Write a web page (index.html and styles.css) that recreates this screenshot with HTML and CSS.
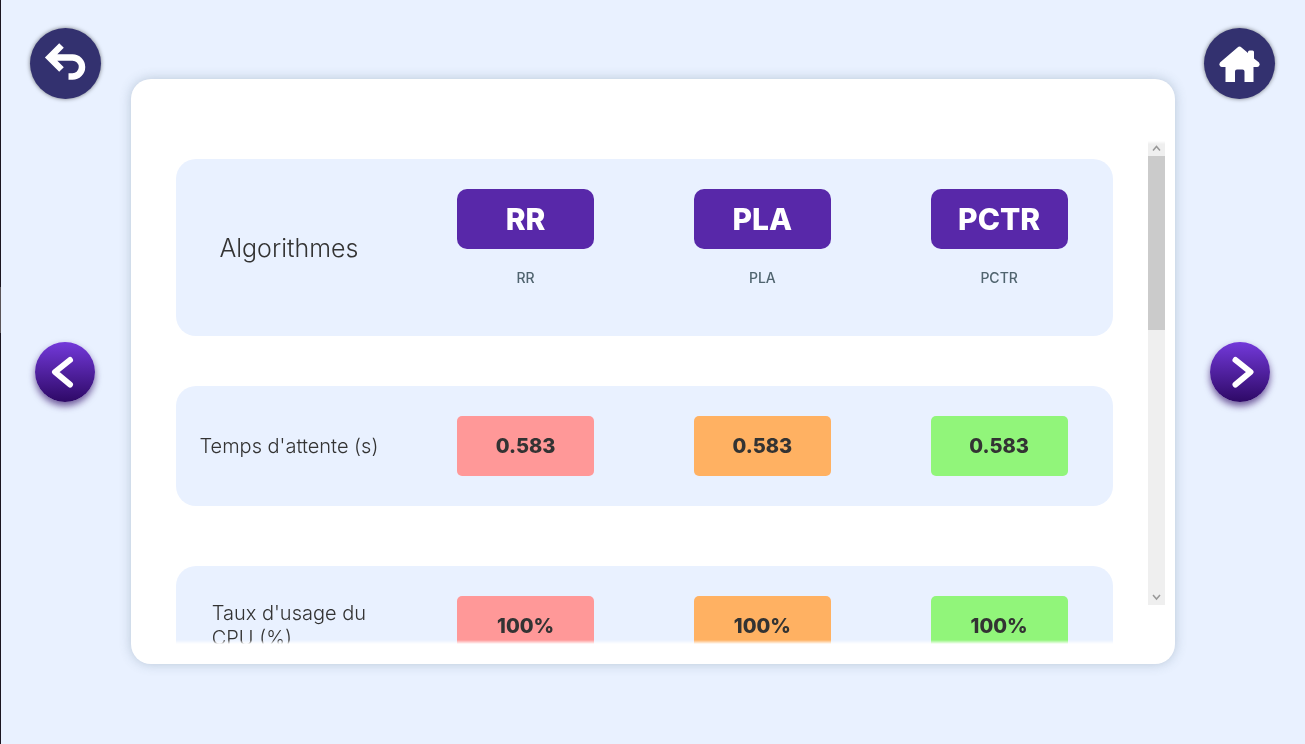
FILE: index.html
```html
<!DOCTYPE html>
<html lang="fr">
<head>
<meta charset="utf-8">
<meta name="viewport" content="width=device-width, initial-scale=1">
<title>Comparaison des algorithmes</title>
<link rel="stylesheet" href="styles.css">
</head>
<body>
<div class="page">
  <nav class="side" aria-label="Précédent">
    <button class="round-btn" type="button" aria-label="Retour">
      <svg viewBox="0 0 71 71" aria-hidden="true"><path d="M31.500 17.500 19.500 29.500 31.500 41.500M20 29.500h22.500a9.500 9.500 0 0 1 0 19H38.500" fill="none" stroke="#fff" stroke-width="6.500"/></svg>
    </button>
    <button class="arrow-btn" type="button" aria-label="Page précédente">
      <svg viewBox="0 0 60 60" aria-hidden="true"><path d="M35 18 20 30 35 42.500" /></svg>
    </button>
  </nav>

  <main class="card">
    <div class="viewport">
      <table class="results">
        <tbody>
          <tr class="row row-head">
            <th class="label label-large" scope="row">Algorithmes</th>
            <td><div class="chip chip-name">RR</div><div class="caption">RR</div></td>
            <td><div class="chip chip-name">PLA</div><div class="caption">PLA</div></td>
            <td><div class="chip chip-name">PCTR</div><div class="caption">PCTR</div></td>
          </tr>
          <tr class="row">
            <th class="label" scope="row">Temps d'attente (s)</th>
            <td><div class="chip red">0.583</div></td>
            <td><div class="chip orange">0.583</div></td>
            <td><div class="chip green">0.583</div></td>
          </tr>
          <tr class="row">
            <th class="label" scope="row">Taux d'usage du<br>CPU (%)</th>
            <td><div class="chip red">100%</div></td>
            <td><div class="chip orange">100%</div></td>
            <td><div class="chip green">100%</div></td>
          </tr>
        </tbody>
      </table>
    </div>
    <div class="scrollbar" aria-hidden="true">
      <svg class="scroll-arrow" viewBox="0 0 17 15"><path d="M5 9.500 8.500 5.500 12 9.500"/></svg>
      <div class="track"><div class="thumb"></div></div>
      <svg class="scroll-arrow" viewBox="0 0 17 15"><path d="M5 5 8.500 9 12 5"/></svg>
    </div>
  </main>

  <nav class="side" aria-label="Suivant">
    <button class="round-btn" type="button" aria-label="Accueil">
      <svg viewBox="0 0 71 71" aria-hidden="true"><path d="M33.500 19.500q2-2 4 0L44 25v-1q0-1.500 1.500-1.500H48.500q1.500 0 1.500 1.500v6.500l5 4q1.500 2 0 3.500-.5 1-2 1H49.500V54H40.500V43.500q0-2-2-2H33q-2 0-2 2V54H21.500V39H18q-1.500 0-2-1-1.500-1.500 0-3.500Z" fill="#fff"/></svg>
    </button>
    <button class="arrow-btn" type="button" aria-label="Page suivante">
      <svg viewBox="0 0 60 60" aria-hidden="true"><path d="M25.500 18 40.500 30 25.500 42.500"/></svg>
    </button>
  </nav>
</div>
</body>
</html>
```
FILE: styles.css
```css
* { box-sizing: border-box; }

body {
  margin: 0;
  font-family: Inter, "Noto Sans", sans-serif;
  color: #333;
  background:
    linear-gradient(#5a5458, #5a5458) 0 287px / 1px 46px no-repeat,
    linear-gradient(#1b1520, #1b1520) 0 0 / 1px 100% no-repeat,
    #e9f1ff;
}

.page {
  display: grid;
  grid-template-columns: 1fr 8fr 1fr;
  grid-template-rows: minmax(0, 1fr);
  height: 100vh;
  overflow: hidden;
}

.side {
  display: grid;
  grid-template-rows: 1fr auto 1fr;
  justify-items: center;
}

.round-btn,
.arrow-btn {
  padding: 0;
  border: 0;
  border-radius: 50%;
  cursor: pointer;
}

.round-btn {
  width: 71px;
  height: 71px;
  margin-top: 28px;
  background: #33316f;
  box-shadow: 0 0 4px rgba(0, 0, 0, 0.5);
}

.arrow-btn {
  grid-row: 2;
  width: 60px;
  height: 60px;
  background: linear-gradient(#7339da, #2e0966);
  box-shadow: 0 4px 7px rgba(46, 9, 102, 0.65);
}

.round-btn svg,
.arrow-btn svg {
  display: block;
  width: 100%;
  height: 100%;
}

.arrow-btn path {
  fill: none;
  stroke: #fff;
  stroke-width: 6;
  stroke-linecap: round;
  stroke-linejoin: round;
}

.card {
  display: flex;
  margin: 79px 0 80px;
  padding: 62px 10px 20px 45px;
  border-radius: 20px;
  background: #fff;
  box-shadow: 0 0 12px rgba(70, 100, 120, 0.3);
}

.viewport {
  flex: 1;
  min-height: 0;
  padding-top: 18px;
  overflow: hidden;
  mask-image: linear-gradient(to top, transparent, #000 4px);
}

.results,
.results tbody {
  display: block;
}

.row {
  display: grid;
  grid-template-columns: repeat(4, minmax(0, 1fr));
  column-gap: 100px;
  align-items: center;
  margin-bottom: 60px;
  padding: 30px 45px;
  border-radius: 20px;
  background: #e9f1ff;
}

.row-head { margin-bottom: 50px; }

.row td { padding: 0; }

.label {
  justify-self: center;
  padding: 0;
  font-size: 20px;
  line-height: 25px;
  font-weight: 300;
  text-align: left;
  white-space: nowrap;
}

.label-large {
  font-size: 25px;
  line-height: 32px;
}

.chip {
  display: grid;
  place-items: center;
  height: 60px;
  border-radius: 5px;
  font-size: 20px;
  font-weight: 800;
}

.chip-name {
  border-radius: 10px;
  background: #5828a9;
  color: #fff;
  font-size: 30px;
}

.red { background: #ff9898; }
.orange { background: #ffb162; }
.green { background: #91f57a; }

.caption {
  padding: 20px 0 19px;
  color: #50646f;
  font-size: 14px;
  line-height: 18px;
  font-weight: 500;
  text-align: center;
}

.scrollbar {
  display: flex;
  flex-direction: column;
  width: 17px;
  margin: 0 0 39px 35px;
  background: #efefef;
  mask-image: linear-gradient(transparent, #000 3px);
}

.scroll-arrow {
  flex: none;
  width: 17px;
  height: 15px;
  fill: none;
  stroke: #999;
  stroke-width: 1.5;
}

.track { flex: 1; }

.thumb {
  height: 40%;
  background: #cbcbcb;
}
```
